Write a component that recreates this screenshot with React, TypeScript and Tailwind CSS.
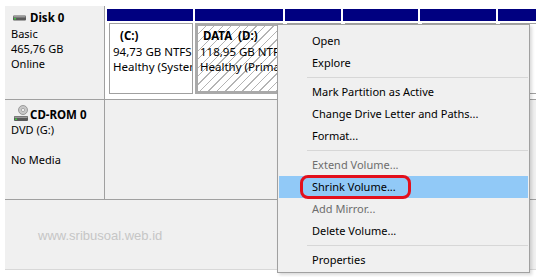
import React from 'react';

const parts = [
  { w: 86, label: '(C:)', pl: 'pl-[7px]', size: '94,73 GB NTFS', status: 'Healthy (System, Active, Primary Partition)', sel: false },
  { w: 88, label: 'DATA\u00a0 (D:)', pl: 'pl-[3px]', size: '118,95 GB NTFS', status: 'Healthy (Primary Partition)', sel: true },
  { w: 56, label: '', pl: '', size: '', status: '', sel: false },
  { w: 75, label: '', pl: '', size: '', status: '', sel: false },
  { w: 76, label: '', pl: '', size: '', status: '', sel: false },
  { w: 60, label: '', pl: '', size: '', status: '', sel: false },
];

const menu: (string | { t: string; off?: boolean; hot?: boolean })[] = [
  { t: 'Open' },
  { t: 'Explore' },
  '-',
  { t: 'Mark Partition as Active' },
  { t: 'Change Drive Letter and Paths...' },
  { t: 'Format...' },
  '-',
  { t: 'Extend Volume...', off: true },
  { t: 'Shrink Volume...', hot: true },
  { t: 'Add Mirror...', off: true },
  { t: 'Delete Volume...' },
  '-',
  { t: 'Properties' },
];

function DiskIcon() {
  return (
    <svg width="13" height="6" viewBox="0 0 13 6" className="shrink-0">
      <rect x="0" y="0.5" width="13" height="5" rx="1" fill="#5a5a5a" />
      <rect x="0.5" y="1" width="12" height="1.5" fill="#9a9a9a" />
      <rect x="1" y="3" width="2" height="1.5" fill="#3fc43f" />
    </svg>
  );
}

function CdIcon() {
  return (
    <svg width="16" height="17" viewBox="0 0 16 17" className="shrink-0">
      <circle cx="10" cy="5" r="4.5" fill="#c8c8c8" stroke="#8a8a8a" strokeWidth="0.8" />
      <circle cx="10" cy="5" r="1.6" fill="#f4f4f4" stroke="#8a8a8a" strokeWidth="0.6" />
      <rect x="1" y="11" width="14" height="5" rx="1" fill="#5a5a5a" />
      <rect x="1.5" y="11.5" width="13" height="1.5" fill="#9a9a9a" />
      <rect x="2" y="13.5" width="2" height="1.5" fill="#3fc43f" />
    </svg>
  );
}

export default function App() {
  return (
    <div className="relative w-[536px] h-[277px] overflow-hidden bg-white pl-[5px] pt-[6px] font-['Noto_Sans',sans-serif] text-[11px] text-black">
      <div className="h-[264px] bg-[#f0f0f0] border-b border-[#d8d8d8]">
        {/* Disk 0 */}
        <div className="flex h-[94px] border-b border-[#a0a0a0]">
          <div className="w-[100px] shrink-0 border-r border-[#a0a0a0] pl-[6px] pt-[3px] leading-[15px]">
            <div className="flex items-center gap-[4px] h-[17px] pl-[2px]">
              <DiskIcon />
              <span className="font-bold text-[11.5px]">Disk 0</span>
            </div>
            <div>Basic</div>
            <div>465,76 GB</div>
            <div>Online</div>
          </div>
          <div className="flex-1 flex gap-[2px] pl-[2px] pt-[3px] bg-white">
            {parts.map((p, i) => (
              <div key={i} style={{ width: p.w }} className="shrink-0 flex flex-col">
                <div className="h-[12px] bg-[#000080]" />
                <div
                  className={
                    p.sel
                      ? 'mt-[2px] h-[71px] border-[3px] border-[#a9a9a9] bg-[repeating-linear-gradient(135deg,#ffffff_0px,#ffffff_5px,#b4b4b4_5px,#b4b4b4_6px)] overflow-hidden'
                      : 'mt-[2px] ml-[2px] h-[71px] border border-[#a0a0a0] bg-white overflow-hidden'
                  }
                >
                  <div className={`${p.sel ? 'pl-[2px] pt-[2px]' : 'pl-[3px] pt-[4px]'} leading-[15.5px] whitespace-nowrap text-[11.5px]`}>
                    <div className={`${p.pl} font-bold`}>{p.label}</div>
                    <div>{p.size}</div>
                    <div>{p.status}</div>
                  </div>
                </div>
              </div>
            ))}
          </div>
        </div>
        {/* CD-ROM 0 */}
        <div className="flex h-[100px] border-b border-[#a0a0a0]">
          <div className="w-[100px] shrink-0 border-r border-[#a0a0a0] pl-[6px] pt-[4px] leading-[15px]">
            <div className="flex items-end gap-[1px] h-[18px] pl-[2px]">
              <CdIcon />
              <span className="font-bold text-[11.5px] leading-[15px]">CD-ROM 0</span>
            </div>
            <div>DVD (G:)</div>
            <div>&nbsp;</div>
            <div>No Media</div>
          </div>
          <div className="flex-1" />
        </div>
        <div className="pl-[33px] pt-[26px] font-['Liberation_Sans',Arial,sans-serif] text-[13px] text-[#c6c6c6]">
          www.sribusoal.web.id
        </div>
      </div>

      {/* Context menu */}
      <div className="absolute left-[277px] top-[24px] w-[253px] h-[249px] bg-[#f0f0f0] border border-[#a0a0a0] shadow-[2px_2px_3px_rgba(0,0,0,0.15)] pt-[5px]">
        {menu.map((m, i) =>
          typeof m === 'string' ? (
            <div key={i} className="h-[7px] flex items-center pl-[29px] pr-[1px]">
              <div className="h-px w-full bg-[#d7d7d7]" />
            </div>
          ) : (
            <div
              key={i}
              className={`relative h-[22px] flex items-center pl-[33px] mx-[1px] ${m.hot ? 'bg-[#91c9f7]' : ''} ${m.off ? 'text-[#6d6d6d]' : 'text-black'}`}
            >
              {m.t}
              {m.hot && (
                <div className="absolute left-[21px] top-[-1px] w-[111px] h-[24px] border-[3px] border-[#e3101c] rounded-[8px]" />
              )}
            </div>
          )
        )}
      </div>
    </div>
  );
}
